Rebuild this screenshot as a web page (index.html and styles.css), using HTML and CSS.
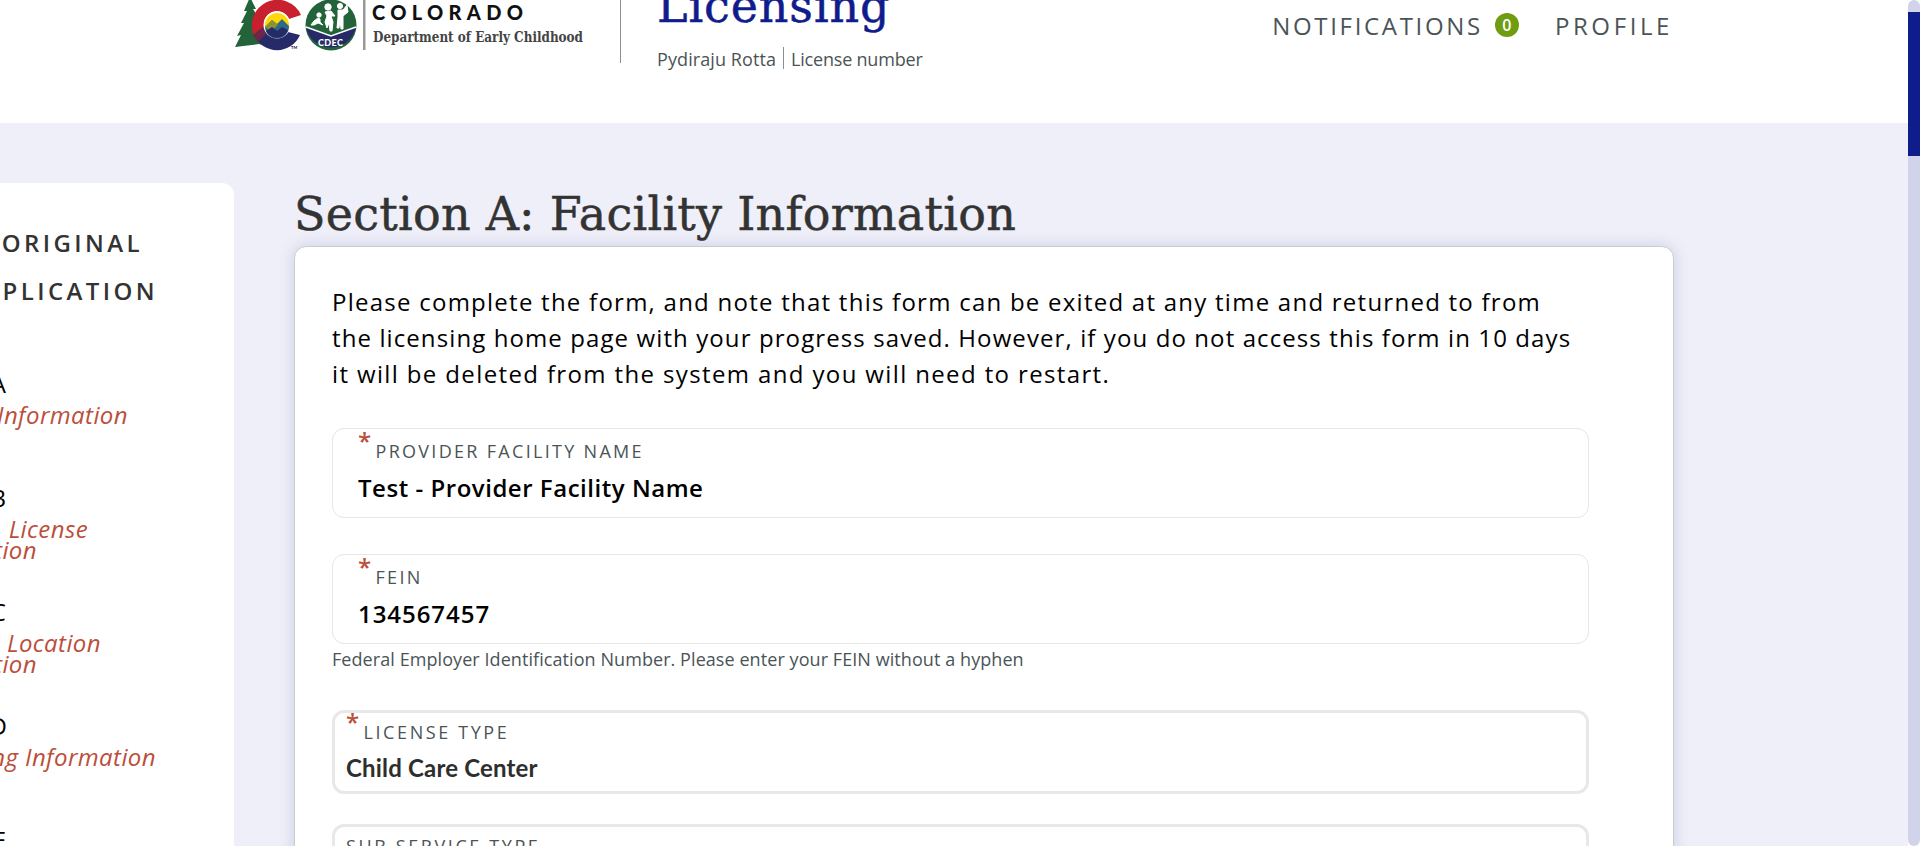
FILE: index.html
```html
<!DOCTYPE html>
<html lang="en">
<head>
<meta charset="utf-8">
<title>Licensing</title>
<link rel="stylesheet" href="styles.css">
</head>
<body>
<div class="page">
  <header class="header">
    <svg class="logo" width="350" height="52" viewBox="235 0 350 52">
      <path d="M250 -3 L256 9 L253 9 L260 20 L256 20 L265 32 L261 32 L266 46 L259 44 L235 47 L241 35 L237 36 L244 23 L241 23 L247 11 L244 11Z" fill="#23633a"/>
      <path d="M301 15 A25 25 0 1 0 254 36 L265 29 A13 13 0 1 1 289 19Z" fill="#c8202f"/>
      <path d="M254 35 A25 25 0 0 0 300 35 L288 32 A14 14 0 0 1 264 29Z" fill="#262a68"/>
      <path d="M253 35 L264 26 L267 33 L258 42Z" fill="#6d2549"/>
      <circle cx="277" cy="25" r="13.5" fill="#fff"/>
      <circle cx="277" cy="25" r="12" fill="#ffd80a"/>
      <path d="M265 27 L272 20 L277 24 L282 19 L289 26 A12 12 0 0 1 265 27Z" fill="#2c6a86"/>
      <path d="M265 27 L272 20 L278 25 L271 31Z" fill="#8c9432"/>
      <path d="M266 31 L272 27 L277 31 L282 27 L288 30 A12 12 0 0 1 266 31Z" fill="#262a68"/>
      <text x="291" y="49" class="logo-tm">TM</text>
      <circle cx="331" cy="25" r="25.500" fill="#23633a"/>
      <path d="M306 27 L331 36 L356 27 A25.500 25.500 0 0 1 306 27Z" fill="#262a68"/>
      <path d="M306 27 L331 36 L356 27" fill="none" stroke="#fff" stroke-width="1.500"/>
      <g fill="#fff" stroke="#fff" stroke-linejoin="round">
        <circle cx="319" cy="15" r="2.200"/>
        <path d="M311 25 L314 21 L318 18 L320 19 L320 22 L323 25 L318 23 L314 25Z"/>
        <circle cx="328" cy="7" r="3.200"/>
        <path d="M325 12 L331 11 L335 16 L331 16 L333 22 L332 31 L330 31 L329 23 L327 28 L325 22 L327 16Z"/>
        <circle cx="340" cy="6" r="2.600"/>
        <path d="M338 10 L343 10 L347 5 L348 12 L343 16 L343 29 L341 29 L340 20 L339 28 L337 28 L338 17Z"/>
      </g>
      <text x="318" y="45.500" class="logo-cdec" textLength="25">CDEC</text>
      <rect x="363" y="0" width="2.500" height="50" fill="#999"/>
      <text x="372" y="20" class="logo-state" textLength="151">COLORADO</text>
      <text x="373" y="42" class="logo-dept" textLength="210" lengthAdjust="spacingAndGlyphs">Department of Early Childhood</text>
    </svg>
    <div class="brand">
      <div class="brand-title">Licensing</div>
      <div class="brand-sub"><span class="user">Pydiraju Rotta</span><span class="license-number">License number</span></div>
    </div>
    <nav class="nav">
      <span class="notifications">NOTIFICATIONS</span><span class="badge">0</span><span class="profile">PROFILE</span>
    </nav>
  </header>
  <div class="body">
    <aside class="sidebar">
      <div class="side-title end-140">ORIGINAL</div>
      <div class="side-title end-155">APPLICATION</div>
      <div class="step">
        <div class="step-name end-6">Section A</div>
        <div class="step-link end-127">Facility Information</div>
      </div>
      <div class="step">
        <div class="step-name end-6">Section B</div>
        <div class="step-link end-87">License</div>
        <div class="step-link end-36">Information</div>
      </div>
      <div class="step">
        <div class="step-name end-6">Section C</div>
        <div class="step-link end-100">Location</div>
        <div class="step-link end-36">Information</div>
      </div>
      <div class="step">
        <div class="step-name end-7">Section D</div>
        <div class="step-link end-155">ng Information</div>
      </div>
      <div class="step">
        <div class="step-name end-6">Section E</div>
      </div>
    </aside>
    <main class="main">
      <h1 class="title">Section A: Facility Information</h1>
      <section class="card">
        <p class="intro">Please complete the form, and note that this form can be exited at any time and returned to from<br><span class="line-2">the licensing home page with your progress saved. However, if you do not access this form in 10 days</span><br><span class="line-3">it will be deleted from the system and you will need to restart.</span></p>
        <div class="field">
          <div class="label"><span class="req">*</span>PROVIDER FACILITY NAME</div>
          <div class="value">Test - Provider Facility Name</div>
        </div>
        <div class="field">
          <div class="label"><span class="req">*</span>FEIN</div>
          <div class="value number">134567457</div>
        </div>
        <div class="hint">Federal Employer Identification Number. Please enter your FEIN without a hyphen</div>
        <div class="select">
          <div class="label"><span class="req">*</span>LICENSE TYPE</div>
          <div class="choice">Child Care Center</div>
        </div>
        <div class="select">
          <div class="label">SUB SERVICE TYPE</div>
        </div>
      </section>
    </main>
  </div>
</div>
<div class="scrollbar"><div class="thumb"></div></div>
</body>
</html>
```
FILE: styles.css
```css
* { box-sizing: border-box; }
body {
  margin: 0;
  display: flex;
  height: 846px;
  overflow: hidden;
  background: #fff;
  font-family: "Open Sans", sans-serif;
  font-size: 24px;
  color: #000;
}
.page { flex: 1; height: 846px; overflow: hidden; background: #efeff9; }

/* Header */
.header {
  height: 123px;
  padding: 0 235px;
  display: flex;
  align-items: flex-start;
  background: #fff;
  overflow: hidden;
}
.logo { display: block; flex: none; }
.logo-tm { font: 700 4px Lato, sans-serif; }
.logo-cdec { font: 900 9px Lato, sans-serif; fill: #fff; }
.logo-state { font: 900 20px Lato, sans-serif; fill: #111; }
.logo-dept { font: 700 14px "DejaVu Serif", serif; fill: #444; }
.brand { margin-left: 35px; padding-left: 36px; height: 63px; border-left: 1px solid #8a8d92; white-space: nowrap; }
.brand-title { font: 46px/12px "DejaVu Serif", serif; letter-spacing: .9px; color: #0f1d8c; -webkit-text-stroke: .5px #0f1d8c; }
.brand-sub { margin-top: 35px; display: flex; font-size: 18px; line-height: 24px; color: #4a5457; }
.user { letter-spacing: .09px; }
.license-number { height: 22px; margin-left: 7px; padding-left: 7px; border-left: 1px solid #8a8d92; letter-spacing: -.2px; }
.nav { margin: 13px 0 0 auto; display: flex; line-height: 25px; color: #4a5457; white-space: nowrap; }
.notifications { letter-spacing: 2.68px; }
.profile { letter-spacing: 3.6px; }
.badge { width: 24px; height: 24px; margin: 0 36px 0 12px; border-radius: 50%; background: #6f9c10; color: #fff; font-size: 16px; font-weight: 600; line-height: 24px; text-align: center; }

/* Progress sidebar */
.body { display: flex; align-items: flex-start; }
.sidebar { width: 234px; height: 700px; margin-top: 60px; padding-top: 36px; background: #fff; border-radius: 0 12px 0 0; overflow: hidden; }
.side-title, .step-name, .step-link { display: flex; justify-content: flex-end; white-space: nowrap; }
.step { height: 114px; }
.side-title { line-height: 48px; font-weight: 600; letter-spacing: 3.4px; color: #333; }
.side-title + .step { margin-top: 53px; }
.step-name { line-height: 32px; padding-bottom: 4px; }
.step-link { line-height: 21px; font-style: italic; letter-spacing: .4px; color: #bb4f3b; }
.end-6 { width: 6px; }
.end-7 { width: 7px; }
.end-36 { width: 37px; }
.end-87 { width: 88px; }
.end-100 { width: 101px; }
.end-127 { width: 128px; }
.end-140 { width: 143px; }
.end-155 { width: 158px; }
.step-link.end-155 { width: 156px; }

/* Form */
.main { margin: 63px 0 0 60px; width: 1380px; }
.title { margin: 0 0 4px; font: 400 46px/56px "DejaVu Serif", serif; letter-spacing: .25px; color: #333; white-space: nowrap; -webkit-text-stroke: .5px #333; }
.card { height: 700px; padding: 37px 84px 0 37px; background: #fff; border: 1px solid #ccc; border-radius: 12px; box-shadow: 0 0 15px rgba(60, 70, 150, .2); }
.intro { margin: 0 0 36px; line-height: 36px; letter-spacing: 1.25px; white-space: nowrap; }
.line-2 { letter-spacing: 1.1px; }
.line-3 { letter-spacing: 1.37px; }
.field { height: 90px; margin-bottom: 36px; padding: 10px 25px; border: 1px solid #e6e6e6; border-radius: 12px; }
.field + .hint { margin-top: -33px; }
.label { display: flex; font-size: 18px; line-height: 24px; letter-spacing: 2.3px; color: #4a5457; white-space: nowrap; }
.req { width: 17.5px; height: 24px; margin-top: -5px; color: #bb4f3b; font-weight: 600; font-size: 24px; line-height: 14px; letter-spacing: 0; }
.value { margin-top: 10px; line-height: 30px; font-weight: 600; letter-spacing: .53px; }
.number { letter-spacing: .95px; }
.hint { margin-bottom: 39px; font-size: 18px; line-height: 24px; letter-spacing: .07px; color: #4a5457; }
.select { height: 84px; margin-bottom: 30px; padding: 7px 11px; border: 3px solid #e8e8e8; border-radius: 12px; }
.select .label { letter-spacing: 2.6px; }
.choice { margin-top: 9px; font: 700 24px/30px Lato, sans-serif; letter-spacing: .18px; color: #2e2e2e; }

.scrollbar { width: 12px; height: 846px; padding-top: 12px; background: #d0d3ea; border-radius: 6px; }
.thumb { height: 144px; background: #0f1d8c; }
```
